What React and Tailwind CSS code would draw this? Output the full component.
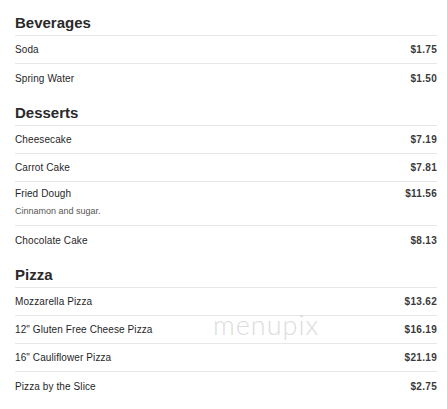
import React from 'react';

const sections = [
  {
    title: 'Beverages',
    items: [
      { name: 'Soda', price: '$1.75' },
      { name: 'Spring Water', price: '$1.50' },
    ],
  },
  {
    title: 'Desserts',
    items: [
      { name: 'Cheesecake', price: '$7.19' },
      { name: 'Carrot Cake', price: '$7.81' },
      { name: 'Fried Dough', price: '$11.56', desc: 'Cinnamon and sugar.' },
      { name: 'Chocolate Cake', price: '$8.13' },
    ],
  },
  {
    title: 'Pizza',
    items: [
      { name: 'Mozzarella Pizza', price: '$13.62' },
      { name: '12" Gluten Free Cheese Pizza', price: '$16.19' },
      { name: '16" Cauliflower Pizza', price: '$21.19' },
      { name: 'Pizza by the Slice', price: '$2.75' },
    ],
  },
];

function Item({ item }) {
  if (item.desc) {
    return (
      <div className="h-[44px] pt-[5px]">
        <div className="flex justify-between leading-[14px]">
          <span className="text-[10px] text-[#1f1f1f] tracking-[0.1px]">{item.name}</span>
          <span className="text-[10px] font-bold text-[#3a3a3a] tracking-[0.3px]">{item.price}</span>
        </div>
        <div className="mt-[3px] text-[9px] leading-[14px] text-[#555]">{item.desc}</div>
      </div>
    );
  }
  return (
    <div className="h-[28px] flex items-center justify-between">
      <span className="text-[10px] text-[#1f1f1f] tracking-[0.1px]">{item.name}</span>
      <span className="text-[10px] font-bold text-[#3a3a3a] tracking-[0.3px]">{item.price}</span>
    </div>
  );
}

export default function App() {
  return (
    <div
      className="relative min-h-screen bg-white pt-[2px] pl-[15px] pr-[10px]"
      style={{ fontFamily: '"Liberation Sans", Arial, sans-serif' }}
    >
      {sections.map((s) => (
        <div key={s.title}>
          <div className="h-[34px] flex items-end pb-[3px] border-b border-[#e6e6e6]">
            <h2 className="text-[15px] leading-[18px] font-bold text-[#2a2a2a]">{s.title}</h2>
          </div>
          <div className="divide-y divide-[#e6e6e6]">
            {s.items.map((it) => (
              <Item key={it.name} item={it} />
            ))}
          </div>
        </div>
      ))}
      <div
        className="absolute left-[213px] top-[311px] text-[27px] leading-[28px] font-light text-[#dcdcdc] tracking-[1px] pointer-events-none"
        style={{ fontFamily: 'Lato, "Open Sans", sans-serif' }}
      >
        menupix
      </div>
    </div>
  );
}
